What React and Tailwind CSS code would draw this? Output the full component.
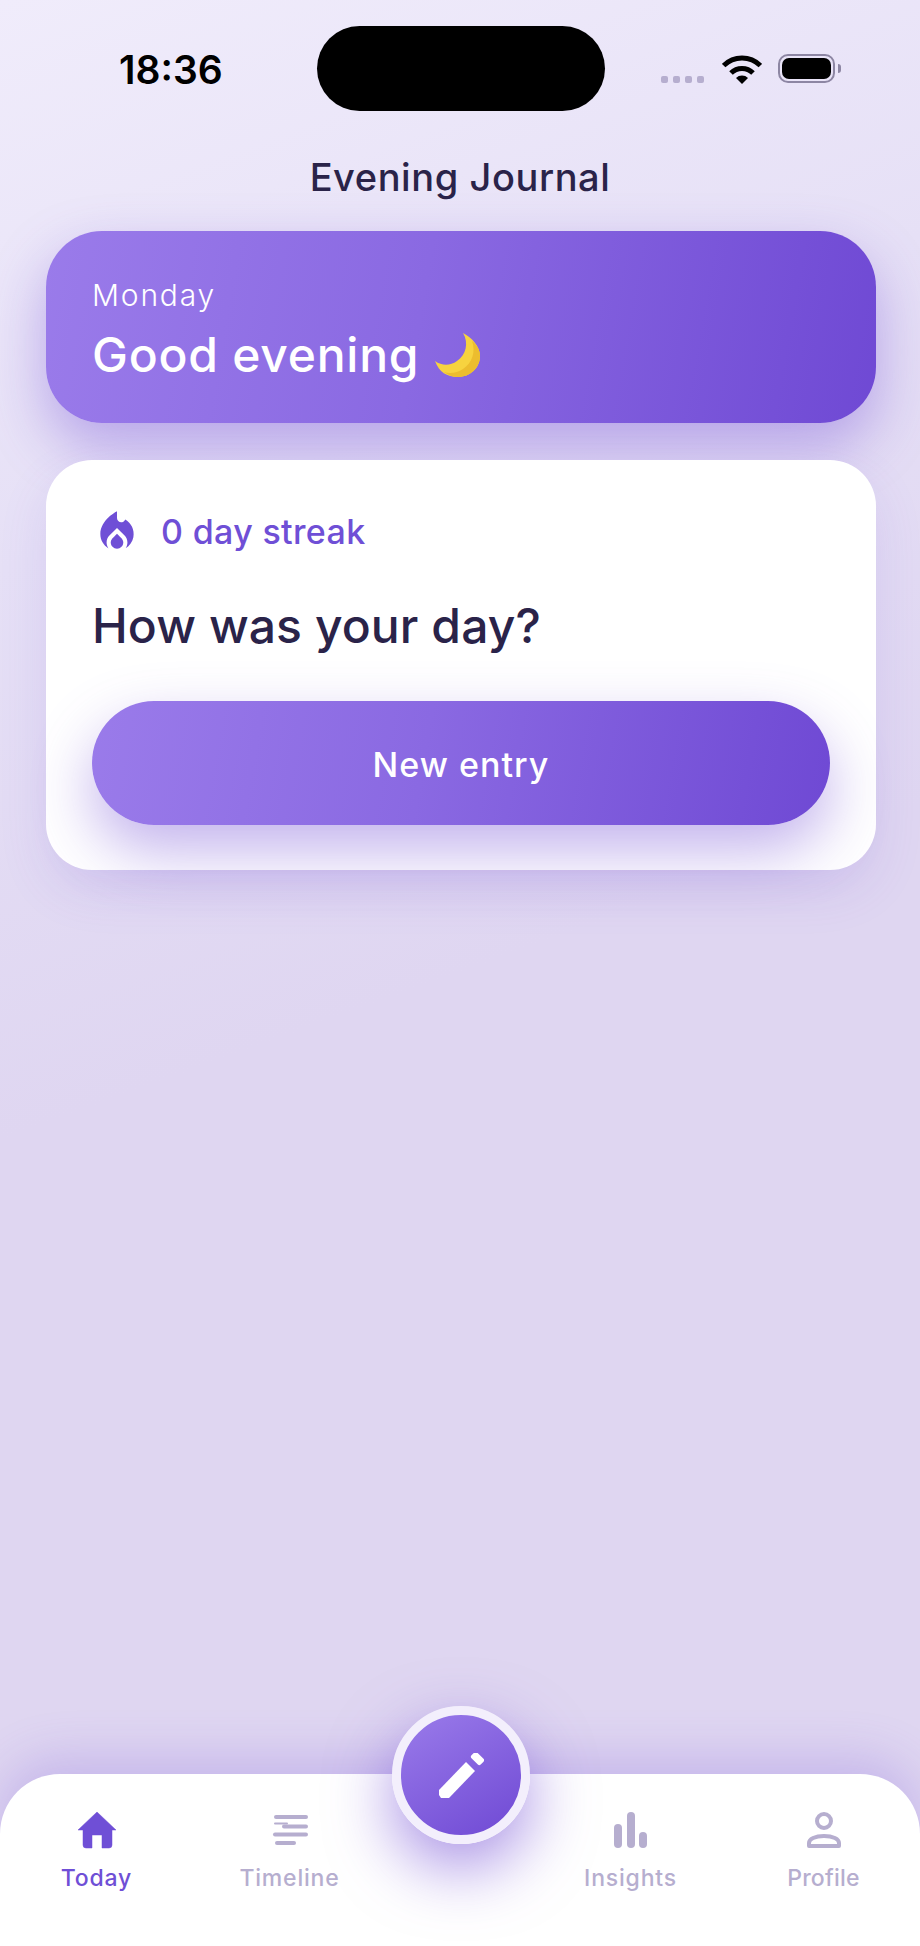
import React from "react";

const font = "font-['Inter','Liberation_Sans',sans-serif]";

const PURPLE = "#6f4fd6";
const MUTED = "#b6aecf";

const Wifi = () => (
  <svg width="40" height="29" viewBox="0 0 40 29" fill="none">
    <path d="M20 29L14 23A8.500 8.500 0 0 1 26 23z" fill="#000" />
    <path d="M9 18A15.500 15.500 0 0 1 31 18" stroke="#000" strokeWidth="5" />
    <path d="M1.600 10.600A26 26 0 0 1 38.400 10.600" stroke="#000" strokeWidth="5" />
  </svg>
);

const Battery = () => (
  <div className="flex items-center gap-[3px]">
    <div className="w-[57px] h-[29px] rounded-[10px] border-2 border-[#8d86a3] p-[2px]">
      <div className="w-full h-full rounded-[7px] bg-black" />
    </div>
    <div className="w-[3px] h-[9px] rounded-r-full bg-[#8d86a3]" />
  </div>
);

const StatusBar = () => (
  <div className="relative h-[137px] shrink-0">
    <span className="absolute left-[119px] top-[48px] font-semibold text-[39px] leading-[44px] text-black">
      18:36
    </span>
    <div className="absolute left-[317px] top-[26px] w-[288px] h-[85px] rounded-[44px] bg-black" />
    <div className="absolute left-[661px] top-[76px] flex gap-[5px]">
      {[0, 1, 2, 3].map((i) => (
        <div key={i} className="w-[7px] h-[7px] rounded-[2px] bg-[#b6aecf]" />
      ))}
    </div>
    <div className="absolute left-[722px] top-[55px]">
      <Wifi />
    </div>
    <div className="absolute left-[778px] top-[54px]">
      <Battery />
    </div>
  </div>
);

const FlameIcon = () => (
  <svg width="50" height="50" viewBox="0 0 24 24" fill={PURPLE} className="shrink-0">
    <path d="M12 12.900l-2.130 2.090c-.56.55-.87 1.280-.87 2.070C9 18.680 10.350 20 12 20s3-1.320 3-2.940c0-.78-.31-1.520-.87-2.070L12 12.900z" />
    <path d="M16 6l-.44.55C14.380 8.020 12 7.190 12 5.300V2S4 6 4 13c0 2.920 1.560 5.470 3.890 6.860-.56-.79-.89-1.760-.89-2.800 0-1.320.52-2.560 1.470-3.500L12 10.100l3.530 3.470c.95.93 1.470 2.170 1.470 3.500 0 1.020-.31 1.960-.85 2.750 1.890-1.150 3.290-3.060 3.710-5.300.66-3.550-1.080-6.900-3.860-8.520z" />
  </svg>
);

const Moon = () => (
  <svg width="48" height="46" viewBox="0 0 48 46" className="shrink-0">
    <path d="M29 1c9 5 17 13 17 23 0 12-10 21-22 21C13 45 5 40 1 29c7 5 15 5 22 0C32 23 35 11 29 1z" fill="#f7d33f" />
    <path d="M38 9c4 11 0 22-9 28-6 4-13 5-19 3 4 3 9 5 14 5 12 0 22-9 22-21 0-6-3-11-8-15z" fill="#ecbd2e" />
  </svg>
);

const HomeIcon = () => (
  <svg width="40" height="38" viewBox="0 0 40 38" fill={PURPLE}>
    <path d="M20 1L1 19h5v15a3 3 0 0 0 3 3h6V24h10v13h7a3 3 0 0 0 3-3V19h4z" stroke={PURPLE} strokeWidth="0.5" strokeLinejoin="round" />
  </svg>
);

const TimelineIcon = () => (
  <svg width="36" height="32" viewBox="0 0 36 32" stroke={MUTED} strokeLinecap="round" fill="none">
    <path d="M4 3h30" strokeWidth="4" />
    <path d="M3 9.500h12" strokeWidth="2" />
    <path d="M12 12.500h22" strokeWidth="4" />
    <path d="M3 20.500h31" strokeWidth="4" />
    <path d="M5 29h17" strokeWidth="4" />
  </svg>
);

const InsightsIcon = () => (
  <svg width="34" height="36" viewBox="0 0 34 36" fill={MUTED}>
    <rect x="0" y="12" width="8" height="24" rx="4" />
    <rect x="13" y="0" width="8" height="36" rx="4" />
    <rect x="25" y="20" width="8" height="16" rx="4" />
  </svg>
);

const ProfileIcon = () => (
  <svg width="34" height="36" viewBox="0 0 34 36" fill="none" stroke={MUTED} strokeWidth="4">
    <circle cx="17" cy="9" r="7" />
    <path d="M2 34v-3c0-4 6-7 15-7s15 3 15 7v3z" strokeLinejoin="round" />
  </svg>
);

const PencilIcon = () => (
  <svg width="45" height="45" viewBox="0 0 45 45" fill="#fff">
    <path d="M0 37L27 9l9 9-26 27H2l-2-3z" />
    <rect x="32" y="1.500" width="13" height="8" rx="2" transform="rotate(45 38.500 5.500)" />
  </svg>
);

const Tab = ({ icon, label, active, tight }) => (
  <div className="w-[193px] h-[80px] flex flex-col items-center justify-between">
    <div className="h-[38px] flex items-center justify-center">{icon}</div>
    <span
      className={`text-[23px] leading-[26px] font-medium ${
        tight ? "tracking-[0.01em]" : "tracking-[0.035em]"
      } ${active ? "text-[#6f4fd6]" : "text-[#b6aecf]"}`}
    >
      {label}
    </span>
  </div>
);

const App = () => {
  return (
    <div
      className={`${font} relative w-[920px] h-[1946px] overflow-hidden flex flex-col bg-[linear-gradient(160deg,#f0ecfb_0%,#e6e0f6_25%,#dfd6f1_50%,#dfd6f1_100%)]`}
    >
      <StatusBar />

      <h1 className="h-[80px] shrink-0 text-center text-[38px] leading-[80px] font-medium text-[#2a2349] tracking-[0.015em]">
        Evening Journal
      </h1>

      <div className="flex flex-col gap-[37px] pl-[46px] pr-[44px] mt-[14px]">
        {/* Greeting */}
        <div className="h-[192px] rounded-[56px] px-[46px] pt-[44px] text-white bg-[linear-gradient(100deg,#9a7bea_0%,#8a69e2_45%,#6f49d4_100%)] shadow-[0_24px_56px_rgba(111,73,212,0.4)]">
          <p className="text-[30px] leading-[40px] font-light tracking-[0.06em]">Monday</p>
          <div className="flex items-center gap-[15px] mt-[10px]">
            <p className="text-[48px] leading-[60px] font-medium tracking-[0.016em]">Good evening</p>
            <Moon />
          </div>
        </div>

        {/* Today card */}
        <div className="h-[410px] rounded-[46px] bg-white px-[46px] pt-[50px] shadow-[0_20px_50px_rgba(111,73,212,0.12)]">
          <div className="flex items-center gap-[19px] h-[44px]">
            <FlameIcon />
            <span className="text-[34px] leading-[44px] font-medium tracking-[0.01em] text-[#6f4fd6]">
              0 day streak
            </span>
          </div>
          <p className="mt-[42px] text-[48px] leading-[60px] font-medium tracking-[0.002em] text-[#2a2349]">
            How was your day?
          </p>
          <button className="mt-[45px] w-full h-[124px] rounded-[62px] text-white text-[34px] font-medium tracking-[0.03em] pt-[3px] bg-[linear-gradient(100deg,#9a7bea_0%,#8a69e2_45%,#6f49d4_100%)] shadow-[0_26px_60px_rgba(111,73,212,0.42)]">
            New entry
          </button>
        </div>
      </div>

      {/* Bottom nav */}
      <div className="relative mt-auto h-[172px] rounded-t-[60px] bg-white pt-[37px] flex shadow-[0_-16px_48px_rgba(111,73,212,0.22)]">
        <Tab icon={<HomeIcon />} label="Today" active />
        <Tab icon={<TimelineIcon />} label="Timeline" />
        <div className="w-[148px]" />
        <Tab icon={<InsightsIcon />} label="Insights" />
        <Tab icon={<ProfileIcon />} label="Profile" tight />

        <button className="absolute left-[392px] top-[-68px] w-[138px] h-[138px] rounded-full border-[9px] border-[#f3effc] flex items-center justify-center bg-[linear-gradient(150deg,#9a7bea_0%,#6f49d4_100%)] shadow-[0_24px_64px_rgba(111,73,212,0.6)]">
          <PencilIcon />
        </button>
      </div>
    </div>
  );
};

export default App;
